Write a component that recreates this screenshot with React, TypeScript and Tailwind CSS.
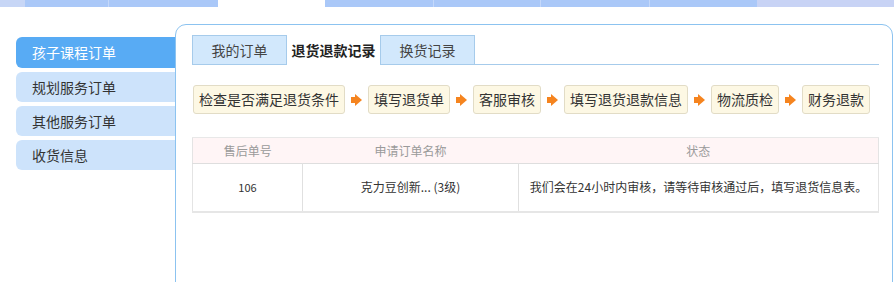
import React from "react";

const topSegments = [
  { w: 25, c: "bg-[#c7d6f6]" },
  { w: 83, c: "bg-[#aac8f8]" },
  { w: 1, c: "bg-[#c4d8fa]" },
  { w: 109, c: "bg-[#aac8f8]" },
  { w: 107, c: "bg-white" },
  { w: 108, c: "bg-[#aac8f8]" },
  { w: 1, c: "bg-[#c4d8fa]" },
  { w: 107, c: "bg-[#aac8f8]" },
  { w: 1, c: "bg-[#c4d8fa]" },
  { w: 108, c: "bg-[#aac8f8]" },
  { w: 1, c: "bg-[#c4d8fa]" },
  { w: 107, c: "bg-[#aac8f8]" },
  { w: 137, c: "bg-[#c8d3f5]" },
];

const menu = ["孩子课程订单", "规划服务订单", "其他服务订单", "收货信息"];
const tabs = ["我的订单", "退货退款记录", "换货记录"];
const steps = ["检查是否满足退货条件", "填写退货单", "客服审核", "填写退货退款信息", "物流质检", "财务退款"];

function Arrow() {
  return (
    <svg width="11" height="12" viewBox="0 0 11 12" className="mx-[6px] shrink-0">
      <rect x="0" y="3" width="5" height="6" fill="#f5841f" />
      <polygon points="4,0 11,6 4,12" fill="#f5841f" />
    </svg>
  );
}

export default function App() {
  return (
    <div
      className="w-[894px] h-[282px] bg-white overflow-hidden text-[#333]"
      style={{ fontFamily: '"Noto Sans CJK SC", "Noto Sans", sans-serif' }}
    >
      <div className="flex h-[7px]">
        {topSegments.map((s, i) => (
          <div key={i} className={s.c} style={{ width: s.w }} />
        ))}
      </div>

      <div className="flex">
        {/* left menu */}
        <div className="w-[175px] pl-4 pt-[30px] flex flex-col gap-[4px] shrink-0">
          {menu.map((m, i) => (
            <div
              key={m}
              className={
                i === 0
                  ? "h-[31px] rounded-l-[6px] bg-[#58abf4] text-white text-[14px] pl-4 flex items-center"
                  : "h-[30px] rounded-l-[6px] bg-[#cde3fb] text-[#333] text-[14px] pl-4 flex items-center"
              }
            >
              {m}
            </div>
          ))}
        </div>

        {/* main panel */}
        <div className="mt-[17px] mr-[2px] flex-1 h-[300px] border border-[#8cc3f0] rounded-t-[11px] pl-4 pr-[13px] pt-[10px]">
          <div className="flex border-b border-[#a6cbeb] h-[30px]">
            {tabs.map((t, i) => (
              <div
                key={t}
                className={
                  i === 1
                    ? "w-[93px] h-[30px] -mb-px bg-white flex items-center justify-center text-[14px] font-bold text-[#222]"
                    : "w-[95px] h-[29px] bg-[#d2e8fc] border border-b-0 border-[#a6cbeb] flex items-center justify-center text-[14px] text-[#444]"
                }
              >
                {t}
              </div>
            ))}
          </div>

          <div className="flex items-center mt-[20px] ml-px">
            {steps.map((s, i) => (
              <React.Fragment key={s}>
                {i > 0 && <Arrow />}
                <div className="h-[29px] px-[5px] flex items-center text-[14px] text-[#333] bg-[#fdf8e4] border border-[#e2dcc6] rounded-[3px] whitespace-nowrap">
                  {s}
                </div>
              </React.Fragment>
            ))}
          </div>

          <table className="mt-[23px] w-[686px] border-collapse text-[12px] table-fixed border-x border-[#e4e4e4]">
            <colgroup>
              <col className="w-[110px]" />
              <col className="w-[216px]" />
              <col className="w-[360px]" />
            </colgroup>
            <thead>
              <tr className="h-[26px] bg-[#fff5f6] border-t border-[#e8e8e8] border-b border-b-[#dedede]">
                {["售后单号", "申请订单名称", "状态"].map((h) => (
                  <th key={h} className="font-normal text-[#9a9a9a] text-center">
                    {h}
                  </th>
                ))}
              </tr>
            </thead>
            <tbody>
              <tr className="h-[48px]">
                <td className="text-center border-r border-[#e0e0e0] border-b-2 border-b-[#e6e6e6] text-[11px]">106</td>
                <td className="text-center border-r border-[#e0e0e0] border-b-2 border-b-[#e6e6e6]">克力豆创新... (3级)</td>
                <td className="text-center border-b-2 border-b-[#e6e6e6]">
                  我们会在24小时内审核，请等待审核通过后，填写退货信息表。
                </td>
              </tr>
            </tbody>
          </table>
        </div>
      </div>
    </div>
  );
}
